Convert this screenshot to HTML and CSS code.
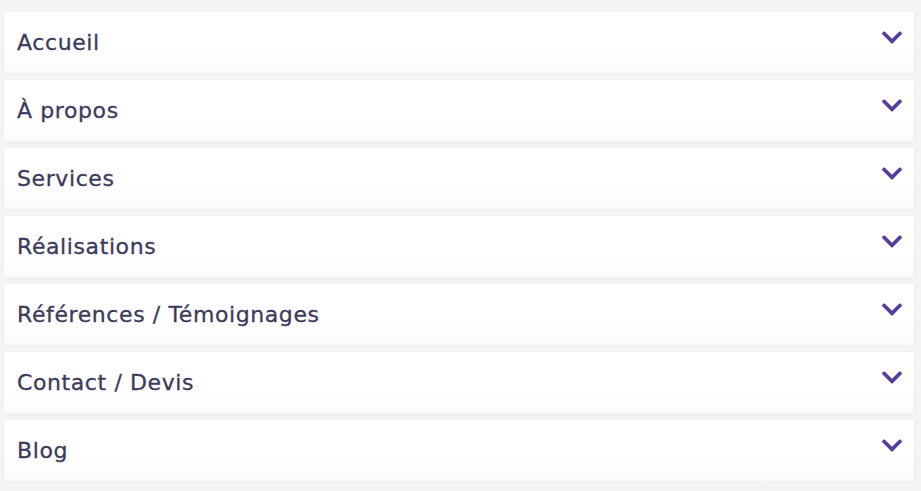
FILE: index.html
```html
<!DOCTYPE html>
<html lang="fr">
<head>
    <meta charset="UTF-8">
    <meta name="viewport" content="width=device-width, initial-scale=1.0">
    <title>Menu</title>
    <link rel="stylesheet" href="styles.css">
</head>
<body>
    <ul class="menu">
        <li class="menu-item">
            <span class="label">Accueil</span>
            <svg class="chevron" viewBox="5 122 438 268"><path d="M207.029 381.476L12.686 187.132c-9.373-9.373-9.373-24.569 0-33.941l22.667-22.667c9.357-9.357 24.522-9.375 33.901-.04L224 284.505l154.745-154.021c9.379-9.335 24.544-9.317 33.901.04l22.667 22.667c9.373 9.373 9.373 24.569 0 33.941L240.971 381.476c-9.373 9.372-24.569 9.372-33.942 0z"/></svg>
        </li>
        <li class="menu-item">
            <span class="label">À propos</span>
            <svg class="chevron" viewBox="5 122 438 268"><path d="M207.029 381.476L12.686 187.132c-9.373-9.373-9.373-24.569 0-33.941l22.667-22.667c9.357-9.357 24.522-9.375 33.901-.04L224 284.505l154.745-154.021c9.379-9.335 24.544-9.317 33.901.04l22.667 22.667c9.373 9.373 9.373 24.569 0 33.941L240.971 381.476c-9.373 9.372-24.569 9.372-33.942 0z"/></svg>
        </li>
        <li class="menu-item">
            <span class="label">Services</span>
            <svg class="chevron" viewBox="5 122 438 268"><path d="M207.029 381.476L12.686 187.132c-9.373-9.373-9.373-24.569 0-33.941l22.667-22.667c9.357-9.357 24.522-9.375 33.901-.04L224 284.505l154.745-154.021c9.379-9.335 24.544-9.317 33.901.04l22.667 22.667c9.373 9.373 9.373 24.569 0 33.941L240.971 381.476c-9.373 9.372-24.569 9.372-33.942 0z"/></svg>
        </li>
        <li class="menu-item">
            <span class="label">Réalisations</span>
            <svg class="chevron" viewBox="5 122 438 268"><path d="M207.029 381.476L12.686 187.132c-9.373-9.373-9.373-24.569 0-33.941l22.667-22.667c9.357-9.357 24.522-9.375 33.901-.04L224 284.505l154.745-154.021c9.379-9.335 24.544-9.317 33.901.04l22.667 22.667c9.373 9.373 9.373 24.569 0 33.941L240.971 381.476c-9.373 9.372-24.569 9.372-33.942 0z"/></svg>
        </li>
        <li class="menu-item">
            <span class="label">Références / Témoignages</span>
            <svg class="chevron" viewBox="5 122 438 268"><path d="M207.029 381.476L12.686 187.132c-9.373-9.373-9.373-24.569 0-33.941l22.667-22.667c9.357-9.357 24.522-9.375 33.901-.04L224 284.505l154.745-154.021c9.379-9.335 24.544-9.317 33.901.04l22.667 22.667c9.373 9.373 9.373 24.569 0 33.941L240.971 381.476c-9.373 9.372-24.569 9.372-33.942 0z"/></svg>
        </li>
        <li class="menu-item">
            <span class="label">Contact / Devis</span>
            <svg class="chevron" viewBox="5 122 438 268"><path d="M207.029 381.476L12.686 187.132c-9.373-9.373-9.373-24.569 0-33.941l22.667-22.667c9.357-9.357 24.522-9.375 33.901-.04L224 284.505l154.745-154.021c9.379-9.335 24.544-9.317 33.901.04l22.667 22.667c9.373 9.373 9.373 24.569 0 33.941L240.971 381.476c-9.373 9.372-24.569 9.372-33.942 0z"/></svg>
        </li>
        <li class="menu-item">
            <span class="label">Blog</span>
            <svg class="chevron" viewBox="5 122 438 268"><path d="M207.029 381.476L12.686 187.132c-9.373-9.373-9.373-24.569 0-33.941l22.667-22.667c9.357-9.357 24.522-9.375 33.901-.04L224 284.505l154.745-154.021c9.379-9.335 24.544-9.317 33.901.04l22.667 22.667c9.373 9.373 9.373 24.569 0 33.941L240.971 381.476c-9.373 9.372-24.569 9.372-33.942 0z"/></svg>
        </li>
    </ul>
</body>
</html>
```

FILE: styles.css
```css
* { margin: 0; padding: 0; box-sizing: border-box; }
body {
    font-family: 'DejaVu Sans', sans-serif;
    background: #f4f4f6;
    padding: 12px 7px 0 4px;
}
.menu {
    list-style: none;
    display: flex;
    flex-direction: column;
    gap: 7px;
}
.menu-item {
    height: 61px;
    background: linear-gradient(to bottom, #ffffff 60%, #fbfbfc 100%);
    box-shadow: 0 1px 4px rgba(0, 0, 0, 0.04);
    display: flex;
    justify-content: space-between;
    align-items: flex-start;
    padding: 0 12px 0 13px;
}
.label {
    color: #3b3a5c;
    font-size: 22px;
    letter-spacing: 0.6px;
    line-height: 61px;
    -webkit-text-stroke: 0.3px #3b3a5c;
}
.chevron {
    width: 20px;
    height: 13px;
    margin-top: 19px;
    fill: #573b9f;
}
```
